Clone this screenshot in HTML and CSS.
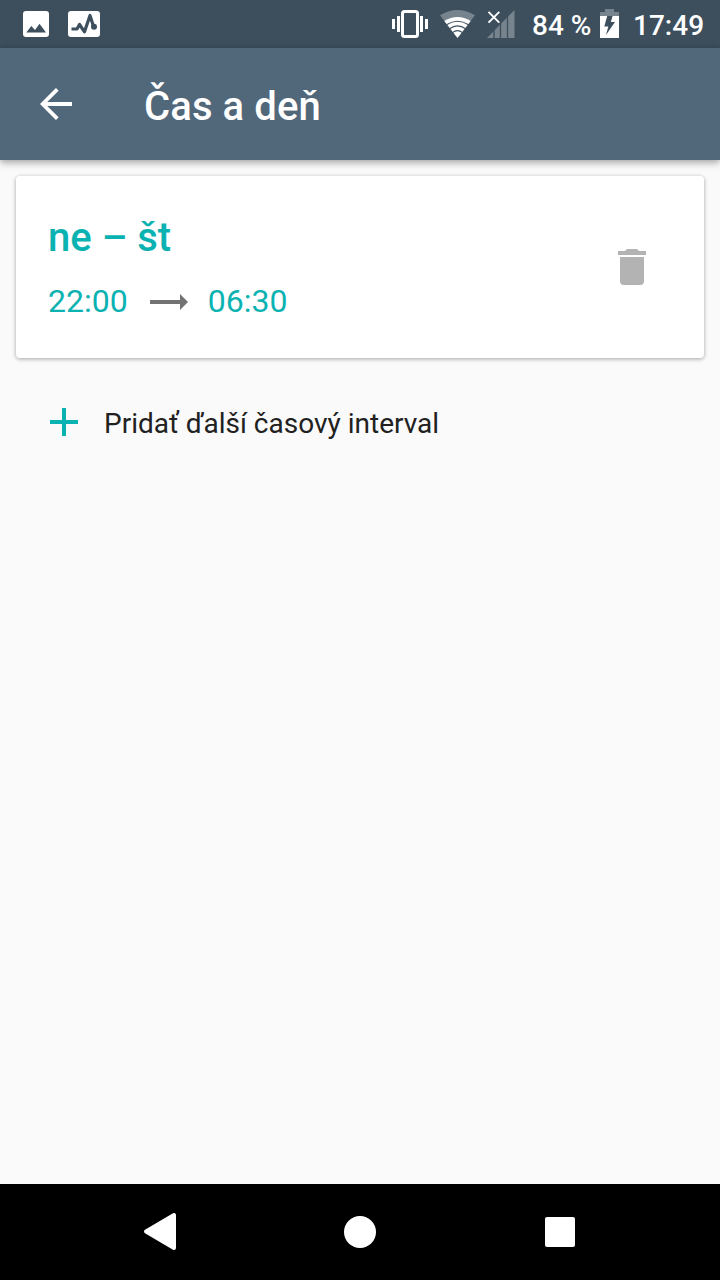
FILE: index.html
```html
<!DOCTYPE html>
<html lang="sk">
<head>
    <meta charset="UTF-8">
    <meta name="viewport" content="width=device-width, initial-scale=1.0">
    <title>Čas a deň</title>
    <link rel="stylesheet" href="styles.css">
</head>
<body>

    <!-- Status bar -->
    <div class="status-bar">
        <svg class="icon-image" width="26" height="26" viewBox="0 0 26 26">
            <rect width="26" height="26" rx="3" fill="#fff"/>
            <path d="M3.3 21.5 L8.3 15 L12 19 L16.5 12.7 L23 21.5 Z" fill="#3d4f5d"/>
        </svg>
        <svg class="icon-activity" width="32" height="26" viewBox="0 0 32 26">
            <rect width="32" height="26" rx="3" fill="#fff"/>
            <path d="M3.5 18 H9 L11.5 13.5 L16.5 20.8 L22 4.5 L25.5 15.5" fill="none" stroke="#3d4f5d" stroke-width="3.2" stroke-linejoin="round"/>
            <circle cx="26" cy="15.8" r="3" fill="#3d4f5d"/>
        </svg>

        <div class="status-right">
            <svg class="icon-vibrate" width="36" height="28" viewBox="0 0 36 28" fill="#fff">
                <rect x="10.5" y="1.5" width="15" height="25" rx="2" fill="none" stroke="#fff" stroke-width="3"/>
                <path d="M0 9h3v10H0z M5 6h3v16H5z M28 6h3v16h-3z M33 9h3v10h-3z"/>
            </svg>
            <svg class="icon-wifi" width="35" height="28" viewBox="0 0 35 28">
                <path d="M17.5 28 L0 5.3 Q17.5 -5.3 35 5.3 Z" fill="#77848e"/>
                <path d="M17.5 28 L4.3 11 Q17.5 3 30.7 11 Z" fill="#fff"/>
                <g fill="none" stroke="#3d4f5d" stroke-width="1.1">
                    <path d="M6.5 14.8 Q17.5 7.8 28.5 14.8"/>
                    <path d="M9.5 18.8 Q17.5 13 25.5 18.8"/>
                    <path d="M12.5 22.6 Q17.5 18.6 22.5 22.6"/>
                </g>
            </svg>
            <svg class="icon-signal" width="28" height="28" viewBox="0 0 28 28">
                <path d="M27.5 0 V28 H0 Z" fill="#77848e"/>
                <path d="M7 17v11 M13.5 12v16 M20.5 5v23" stroke="#3d4f5d" stroke-width="1.3"/>
                <path d="M1.5 1.8 L12.3 12.6 M12.3 1.8 L1.5 12.6" stroke="#fff" stroke-width="1.9"/>
            </svg>
            <span class="battery-level">84 %</span>
            <svg class="icon-battery" width="19" height="30" viewBox="0 0 19 30">
                <path d="M0 3h5V0h9v3h5v4H0z" fill="#77848e"/>
                <path d="M0 7h19v22H0z" fill="#fff"/>
                <path d="M7.2 7 H12.6 L10.8 13 H15 L6 26 L8.3 17.6 H4.3 Z" fill="#3d4f5d"/>
            </svg>
            <span class="clock">17:49</span>
        </div>
    </div>

    <!-- Toolbar -->
    <header class="toolbar">
        <svg class="back" width="32" height="32" viewBox="0 0 32 32">
            <path d="M32 16 H3 M17.3 1.3 L2.6 16 L17.3 30.7" fill="none" stroke="#fff" stroke-width="3.8"/>
        </svg>
        <h1>Čas a deň</h1>
    </header>

    <main>
        <!-- Time interval card -->
        <div class="card">
            <div class="interval">
                <h2>ne – št</h2>
                <div class="times">
                    <span>22:00</span>
                    <svg width="38" height="16" viewBox="0 0 38 16">
                        <path d="M0 6h30V0l8 8-8 8v-6H0z" fill="#737373"/>
                    </svg>
                    <span>06:30</span>
                </div>
            </div>
            <svg class="delete" width="28" height="36" viewBox="0 0 28 36" fill="#b3b3b3">
                <path d="M0 2h7l2-2h10l2 2h7v4H0z M2 8h24v24a4 4 0 0 1-4 4H6a4 4 0 0 1-4-4z"/>
            </svg>
        </div>

        <div class="add-interval">
            <svg width="28" height="28" viewBox="0 0 28 28">
                <path d="M12 0h4v12h12v4H16v12h-4V16H0v-4h12z" fill="#0bb2b2"/>
            </svg>
            <span>Pridať ďalší časový interval</span>
        </div>
    </main>

    <!-- Navigation bar -->
    <nav class="nav-bar">
        <svg width="200" height="96" viewBox="0 0 200 96">
            <path d="M86 47.5 L114 31 V64 Z" fill="#fff" stroke="#fff" stroke-width="4" stroke-linejoin="round"/>
        </svg>
        <svg width="200" height="96" viewBox="0 0 200 96">
            <circle cx="100" cy="48" r="16" fill="#fff"/>
        </svg>
        <svg width="200" height="96" viewBox="0 0 200 96">
            <rect x="85" y="33" width="30" height="30" rx="2" fill="#fff"/>
        </svg>
    </nav>

</body>
</html>
```
FILE: styles.css
```css
* {
    box-sizing: border-box;
}

body {
    margin: 0;
    height: 100vh;
    display: flex;
    flex-direction: column;
    overflow: hidden;
    font-family: Roboto, sans-serif;
    background-color: #fafafa;
}

svg {
    display: block;
    flex-shrink: 0;
}

h1, h2 {
    margin: 0;
    font-size: 40px;
    font-weight: 500;
    line-height: 48px;
}

/* Status bar */
.status-bar {
    display: flex;
    align-items: center;
    height: 48px;
    padding: 0 16px 0 23px;
    background-color: #3d4f5d;
    color: white;
    font-size: 28px;
    font-weight: 500;
    line-height: 48px;
    white-space: nowrap;
}

.icon-activity {
    margin-left: 19px;
}

.status-right {
    display: flex;
    align-items: center;
    margin-left: auto;
}

.icon-wifi {
    margin-left: 12px;
}

.icon-signal {
    margin-left: 12px;
}

.battery-level {
    width: 68px;
    margin-left: 17px;
    padding-top: 4px;
}

.clock {
    width: 71px;
    margin-left: 14px;
    padding-top: 4px;
}

/* Toolbar */
.toolbar {
    display: flex;
    align-items: center;
    height: 112px;
    padding-left: 40px;
    background-color: #51677a;
    color: white;
    box-shadow: 0 2px 8px rgba(0, 0, 0, 0.4);
}

.toolbar h1 {
    margin-left: 72px;
    padding-top: 6px;
    letter-spacing: 0.1px;
}

main {
    flex: 1;
    padding: 16px;
}

/* Card */
.card {
    display: flex;
    align-items: center;
    justify-content: space-between;
    height: 182px;
    padding: 0 58px 0 32px;
    background-color: white;
    border-radius: 4px;
    box-shadow: 0 1px 4px rgba(0, 0, 0, 0.35);
    color: #0bb2b2;
}

.times {
    display: flex;
    align-items: center;
    margin-top: 20px;
    font-size: 32px;
    line-height: 38px;
}

.times svg {
    margin: 2px 20px 0 22px;
}

.add-interval {
    display: flex;
    align-items: center;
    gap: 26px;
    height: 96px;
    margin-top: 16px;
    padding-left: 34px;
    color: #212121;
    font-size: 28px;
}

.add-interval span {
    padding-top: 2px;
}

/* Navigation bar */
.nav-bar {
    display: flex;
    justify-content: center;
    height: 96px;
    background-color: black;
}
```
